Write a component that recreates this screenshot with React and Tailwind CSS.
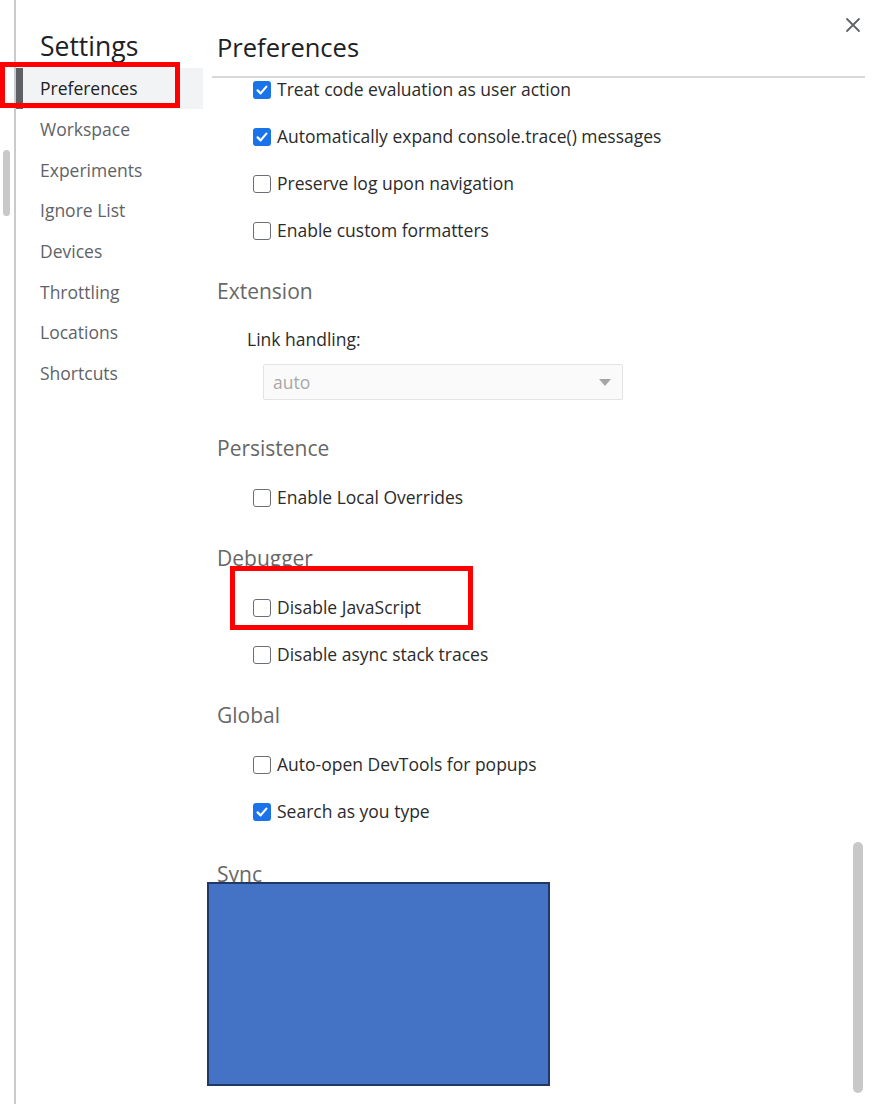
import React from 'react';

const navItems = ['Preferences', 'Workspace', 'Experiments', 'Ignore List', 'Devices', 'Throttling', 'Locations', 'Shortcuts'];

function Checkbox({ checked }) {
  if (checked) {
    return (
      <span className="w-[18px] h-[18px] rounded-[3px] bg-[#1a73e8] flex items-center justify-center shrink-0">
        <svg width="14" height="14" viewBox="0 0 14 14">
          <path d="M2.6 7.4 L5.6 10.4 L11.4 3.6" fill="none" stroke="#fff" strokeWidth="2.2" strokeLinecap="round" strokeLinejoin="round" />
        </svg>
      </span>
    );
  }
  return <span className="w-[18px] h-[18px] rounded-[3px] border-[1.5px] border-[#6b6e72] bg-white shrink-0" />;
}

function Row({ label, checked, className = '' }) {
  return (
    <div className={`h-[47px] flex items-center gap-[6px] pl-[36px] ${className}`}>
      <Checkbox checked={checked} />
      <span className="text-[17.5px] text-[#2b2b2b]">{label}</span>
    </div>
  );
}

function Heading({ children, className = '' }) {
  return <div className={`h-[40px] flex items-center text-[21px] text-[#676767] ${className}`}>{children}</div>;
}

export default function App() {
  return (
    <div className="relative w-[881px] h-[1104px] bg-white overflow-hidden flex" style={{ fontFamily: '"Open Sans", "Noto Sans", sans-serif' }}>
      {/* left gutter with scrollbar */}
      <div className="w-[14px] shrink-0 pt-[150px] pl-[3px]">
        <div className="w-[7px] h-[66px] rounded-full bg-[#c8c8c8]" />
      </div>

      {/* sidebar */}
      <aside className="w-[189px] shrink-0 border-l-2 border-[#cacbcf]">
        <div className="h-[43px] mt-[25px] flex items-center pl-[24px] text-[26.5px] text-[#202124]">Settings</div>
        <nav>
          {navItems.map((item, i) =>
            i === 0 ? (
              <div key={item} className="h-[40.7px] flex items-center pl-[17px] text-[17.5px] bg-[#f1f3f4] text-[#202124] border-l-[7px] border-[#5f6064]">
                {item}
              </div>
            ) : (
              <div key={item} className="h-[40.7px] flex items-center pl-[24px] text-[17.5px] text-[#5f6368]">
                {item}
              </div>
            )
          )}
        </nav>
      </aside>

      {/* main panel */}
      <main className="flex-1 pl-[9px]">
        <div className="h-[76px] pl-[5px] pt-[27px] text-[25.5px] text-[#202124] leading-[40px]">Preferences</div>
        <div className="h-[2px] w-[653px] bg-[#d7d8db]" />
        <div className="h-[1026px] overflow-hidden pl-[5px]">
          <div className="-mt-[12px]">
            <Row label="Treat code evaluation as user action" checked />
            <Row label="Automatically expand console.trace() messages" checked />
            <Row label="Preserve log upon navigation" />
            <Row label="Enable custom formatters" />

            <Heading className="mt-[18px]">Extension</Heading>
            <div className="h-[30px] mt-[12px] flex items-center pl-[30px] text-[17.5px] text-[#2b2b2b]">Link handling:</div>
            <div className="mt-[10px] ml-[46px] w-[360px] h-[36px] border border-[#e3e3e3] rounded-[2px] bg-[#fafafa] flex items-center justify-between pl-[9px] pr-[11px]">
              <span className="text-[17.5px] text-[#a8a8a8]">auto</span>
              <svg width="12" height="7" viewBox="0 0 12 7"><path d="M0 0 H12 L6 7 Z" fill="#a6a6a6" /></svg>
            </div>

            <Heading className="mt-[29px]">Persistence</Heading>
            <Row label="Enable Local Overrides" className="mt-[5px]" />

            <Heading className="mt-[18px]">Debugger</Heading>
            <Row label="Disable JavaScript" className="mt-[5px]" />
            <Row label="Disable async stack traces" />

            <Heading className="mt-[18px]">Global</Heading>
            <Row label="Auto-open DevTools for popups" className="mt-[5px]" />
            <Row label="Search as you type" checked />

            <Heading className="mt-[20px]">Sync</Heading>
          </div>
        </div>
      </main>

      {/* close button */}
      <button className="absolute left-[844px] top-[16px] w-[18px] h-[18px] flex items-center justify-center">
        <svg width="16" height="16" viewBox="0 0 16 16">
          <path d="M2 2 L14 14 M14 2 L2 14" stroke="#5f6368" strokeWidth="1.8" strokeLinecap="round" />
        </svg>
      </button>

      {/* right scrollbar */}
      <div className="absolute left-[853px] top-[842px] w-[10px] h-[251px] rounded-full bg-[#c8c8c8]" />

      {/* redaction */}
      <div className="absolute left-[207px] top-[882px] w-[343px] h-[204px] bg-[#4472c4] border-2 border-[#1f3864]" />

      {/* annotations */}
      <div className="absolute left-0 top-[62px] w-[180px] h-[46px] border-[5px] border-[#ff0000]" />
      <div className="absolute left-[230px] top-[566px] w-[243px] h-[64px] border-[5px] border-[#ff0000]" />
    </div>
  );
}
